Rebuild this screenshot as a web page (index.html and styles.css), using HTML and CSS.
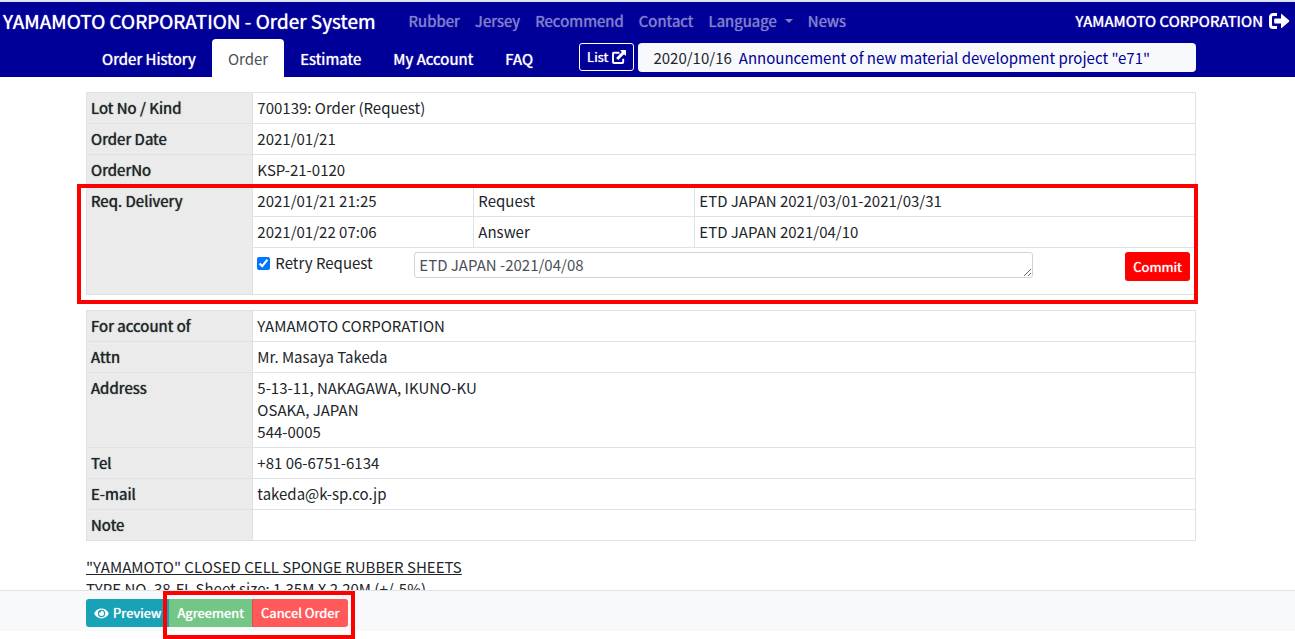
FILE: index.html
```html
<!DOCTYPE html>
<html lang="en">
<head>
<meta charset="utf-8">
<meta name="viewport" content="width=device-width, initial-scale=1">
<title>YAMAMOTO CORPORATION - Order System</title>
<link rel="stylesheet" href="styles.css">
</head>
<body>
<header class="header">
  <nav class="topbar">
    <a class="brand" href="#">YAMAMOTO CORPORATION - Order System</a>
    <div class="site-links">
      <a href="#">Rubber</a>
      <a href="#">Jersey</a>
      <a href="#">Recommend</a>
      <a href="#">Contact</a>
      <a class="dropdown" href="#">Language</a>
      <a href="#">News</a>
    </div>
    <a class="account" href="#">YAMAMOTO CORPORATION
      <svg class="logout-icon" viewBox="0 0 21 16" aria-hidden="true"><path d="M8 1.5H4A2.5 2.5 0 0 0 1.500 4v8A2.500 2.500 0 0 0 4 14.500h4" fill="none" stroke="currentColor" stroke-width="3"/><path d="M6 5.500h6V1.600q0-1.300 1-.4l7 6.100q.7.700 0 1.400l-7 6.100q-1 .9-1-.4V10.500H6q-.8 0-.8-.8V6.300q0-.8.8-.8z" fill="currentColor"/></svg>
    </a>
  </nav>
  <div class="subbar">
    <nav class="tabs">
      <a class="tab" href="#">Order History</a>
      <a class="tab active" href="#" aria-current="page">Order</a>
      <a class="tab" href="#">Estimate</a>
      <a class="tab" href="#">My Account</a>
      <a class="tab" href="#">FAQ</a>
    </nav>
    <button class="list-button" type="button">List
      <svg class="external-icon" viewBox="0 0 14 14" aria-hidden="true"><path d="M7.500 2.800H1.900q-.9 0-.9.900v8.400q0 .9.900.9h8.400q.9 0 .9-.9V8.800" fill="none" stroke="currentColor" stroke-width="1.900"/><path d="M8.800 0H13.400q.6 0 .6.600V5.200q0 .8-.7.300L12 4.200 6.200 10 4.100 7.900 9.900 2.100 8.500.7Q8.100 0 8.800 0z" fill="currentColor"/></svg>
    </button>
    <div class="news"><span>2020/10/16</span><a href="#">Announcement of new material development project "e71"</a></div>
  </div>
</header>

<main class="content">
  <section class="order-block">
    <table class="details">
      <colgroup><col class="col-label"><col class="col-date"><col class="col-kind"><col></colgroup>
      <tbody>
        <tr><th scope="row">Lot No / Kind</th><td colspan="3">700139: Order (Request)</td></tr>
        <tr><th scope="row">Order Date</th><td colspan="3">2021/01/21</td></tr>
        <tr><th scope="row">OrderNo</th><td colspan="3">KSP-21-0120</td></tr>
        <tr><th scope="row" rowspan="3">Req. Delivery</th><td>2021/01/21 21:25</td><td>Request</td><td>ETD JAPAN 2021/03/01-2021/03/31</td></tr>
        <tr><td>2021/01/22 07:06</td><td>Answer</td><td>ETD JAPAN 2021/04/10</td></tr>
        <tr><td colspan="3">
          <form class="retry">
            <label class="retry-check"><input type="checkbox" checked>Retry Request</label>
            <textarea class="retry-text" rows="1" aria-label="Requested delivery">ETD JAPAN -2021/04/08</textarea>
            <button class="commit" type="button">Commit</button>
          </form>
        </td></tr>
      </tbody>
    </table>
    <div class="highlight highlight-delivery"></div>
  </section>

  <table class="details">
    <colgroup><col class="col-label"><col></colgroup>
    <tbody>
      <tr><th scope="row">For account of</th><td>YAMAMOTO CORPORATION</td></tr>
      <tr><th scope="row">Attn</th><td>Mr. Masaya Takeda</td></tr>
      <tr><th scope="row">Address</th><td>5-13-11, NAKAGAWA, IKUNO-KU<br>OSAKA, JAPAN<br>544-0005</td></tr>
      <tr><th scope="row">Tel</th><td>+81 06-6751-6134</td></tr>
      <tr><th scope="row">E-mail</th><td>takeda@k-sp.co.jp</td></tr>
      <tr><th scope="row">Note</th><td></td></tr>
    </tbody>
  </table>

  <section class="product">
    <u>"YAMAMOTO" CLOSED CELL SPONGE RUBBER SHEETS</u><br>
    TYPE NO. 38-FL Sheet size: 1.35M X 2.20M (+/-5%)
  </section>
</main>

<footer class="actions">
  <div class="button-group">
    <button class="action preview" type="button"><svg class="eye-icon" viewBox="0 0 16 12" aria-hidden="true"><path fill="currentColor" fill-rule="evenodd" d="M8 .5C4.500.5 1.600 2.600.1 5.600q-.2.400 0 .8C1.600 9.400 4.500 11.500 8 11.500s6.400-2.100 7.900-5.100q.2-.4 0-.8C14.400 2.600 11.500.5 8 .5zM8 2a4 4 0 1 1 0 8 4 4 0 0 1 0-8zm0 1.300q-.4 0-.8.200A1.300 1.300 0 0 1 5.500 5.200 2.700 2.700 0 1 0 8 3.300z"/></svg>Preview</button>
    <button class="action agree" type="button">Agreement</button>
    <button class="action cancel" type="button">Cancel Order</button>
    <div class="highlight highlight-actions"></div>
  </div>
</footer>
</body>
</html>
```
FILE: styles.css
```css
* { box-sizing: border-box; }

body {
  margin: 0;
  height: 100vh;
  padding-bottom: 8px;
  display: flex;
  flex-direction: column;
  overflow: hidden;
  background: #fff;
  color: #212529;
  font: 15px/22px "Noto Sans CJK JP", "Noto Sans", sans-serif;
}

button, textarea { font: inherit; }
a { color: inherit; text-decoration: none; }

/* Emphasis that keeps the regular letter widths */
.brand, .site-links, .account, .tab, .list-button,
.details th, .commit, .action {
  font-weight: 400;
  text-shadow: 0 0 1px currentColor;
}

.header {
  flex: none;
  border-top: 2px solid #dee2f0;
  background: #000099;
  color: #fff;
}

.topbar {
  display: flex;
  align-items: center;
  height: 37px;
  padding: 0 5px 0 3px;
  white-space: nowrap;
}

.brand { font-size: 19px; line-height: 28px; }

.site-links {
  display: flex;
  gap: 15px;
  margin-left: 33px;
  color: #8080cc;
}

.dropdown::after {
  content: "";
  display: inline-block;
  margin-left: 8px;
  vertical-align: 4px;
  border: 4px solid transparent;
  border-top-color: currentColor;
  border-bottom: 0;
}

.account {
  display: flex;
  align-items: center;
  gap: 6px;
  margin-left: auto;
}

.logout-icon { width: 21px; height: 16px; }

.subbar {
  display: flex;
  height: 38px;
  padding: 0 99px 0 86px;
  white-space: nowrap;
}

.tabs { display: flex; }

.tab {
  padding: 9px 16px 7px;
  border-radius: 4px 4px 0 0;
}

.tab.active {
  background: #fff;
  color: #495057;
  text-shadow: none;
}

.list-button {
  display: flex;
  align-items: center;
  gap: 4px;
  height: 28px;
  margin: 4px 4px 0 30px;
  padding: 0 7px;
  border: 1px solid #fff;
  border-radius: 3px;
  background: transparent;
  color: #fff;
  font-size: 13px;
}

.external-icon { width: 14px; height: 14px; }

.news {
  display: flex;
  flex: 1;
  align-items: center;
  gap: 7px;
  height: 29px;
  margin-top: 4px;
  padding: 0 15px;
  border-radius: 4px;
  background: #f8f9fc;
  color: #212529;
}

.news a { color: #000099; }

.content {
  flex: 1;
  min-height: 0;
  padding: 15px 99px 0 86px;
  overflow: hidden;
}

.order-block { position: relative; margin-bottom: 15px; }

.details {
  width: 100%;
  table-layout: fixed;
  border-collapse: collapse;
}

.details th, .details td {
  height: 31px;
  padding: 4px;
  border: 1px solid #dee2e6;
  text-align: left;
  vertical-align: top;
}

.details th { background: #ebebeb; }

.col-label { width: 15%; }
.col-date, .col-kind { width: 221px; }

.retry {
  display: grid;
  grid-template-columns: 157px 1fr 157px;
  align-items: start;
  height: 38px;
  padding-right: 1px;
}

.retry-check { display: flex; align-items: center; gap: 5px; }
.retry-check input { width: 13px; height: 13px; margin: 0; accent-color: #0075ff; }

.retry-text {
  width: 100%;
  height: 26px;
  padding: 1px 4px;
  overflow: hidden;
  border: 1px solid #ced4da;
  border-radius: 3px;
  background: #fff;
  color: #495057;
}

.commit {
  justify-self: end;
  height: 29px;
  padding: 0 8px;
  border: 0;
  border-radius: 3px;
  background: #ff0000;
  color: #fff;
  font-size: 13px;
}

.product { padding-top: 15px; }

.actions {
  flex: none;
  height: 41px;
  padding: 8px 86px;
  border-top: 1px solid #dee2e6;
  background: #f8f9fa;
}

.button-group { position: relative; display: inline-flex; }

.action {
  display: flex;
  align-items: center;
  gap: 4px;
  height: 28px;
  padding: 0 8px;
  border: 0;
  color: #fff;
  font-size: 13px;
  line-height: 20px;
  white-space: nowrap;
}

.preview { border-radius: 3px 0 0 3px; background: #17a2b8; }
.agree { background: #74c686; }
.cancel { border-radius: 0 3px 3px 0; border-left: 1px solid #d0584a; background: #ff5959; }
.eye-icon { width: 15px; height: 11px; }

.highlight {
  position: absolute;
  border: 4px solid #ff0000;
  pointer-events: none;
}

.highlight-delivery { top: 92px; bottom: -9px; left: -9px; right: -2px; }
.highlight-actions { top: -8px; bottom: -12px; left: 77px; right: -7px; }
```
